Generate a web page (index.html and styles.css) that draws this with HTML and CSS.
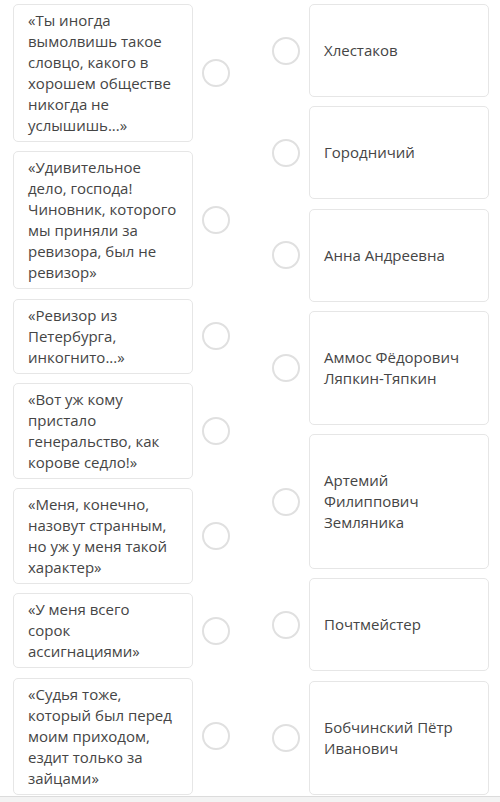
FILE: index.html
```html
<!DOCTYPE html>
<html lang="ru">
<head>
    <meta charset="UTF-8">
    <meta name="viewport" content="width=device-width, initial-scale=1.0">
    <title>Соотнесите реплики и героев</title>
    <link rel="stylesheet" href="styles.css">
</head>
<body>
    <div class="match">
        <div class="column column-left">
            <div class="item">
                <div class="card">«Ты иногда вымолвишь такое словцо, какого в хорошем обществе никогда не услышишь...»</div>
                <span class="dot"></span>
            </div>
            <div class="item">
                <div class="card">«Удивительное дело, господа! Чиновник, которого мы приняли за ревизора, был не ревизор»</div>
                <span class="dot"></span>
            </div>
            <div class="item">
                <div class="card">«Ревизор из Петербурга, инкогнито...»</div>
                <span class="dot"></span>
            </div>
            <div class="item">
                <div class="card">«Вот уж кому пристало генеральство, как корове седло!»</div>
                <span class="dot"></span>
            </div>
            <div class="item">
                <div class="card">«Меня, конечно, назовут странным, но уж у меня такой характер»</div>
                <span class="dot"></span>
            </div>
            <div class="item">
                <div class="card">«У меня всего<br>сорок ассигнациями»</div>
                <span class="dot"></span>
            </div>
            <div class="item">
                <div class="card">«Судья тоже, который был перед моим приходом, ездит только за зайцами»</div>
                <span class="dot"></span>
            </div>
        </div>

        <div class="column column-right">
            <div class="item">
                <span class="dot"></span>
                <div class="card card-name">Хлестаков</div>
            </div>
            <div class="item">
                <span class="dot"></span>
                <div class="card card-name">Городничий</div>
            </div>
            <div class="item">
                <span class="dot"></span>
                <div class="card card-name">Анна Андреевна</div>
            </div>
            <div class="item">
                <span class="dot"></span>
                <div class="card card-name">Аммос Фёдорович Ляпкин-Тяпкин</div>
            </div>
            <div class="item">
                <span class="dot"></span>
                <div class="card card-name">Артемий Филиппович Земляника</div>
            </div>
            <div class="item">
                <span class="dot"></span>
                <div class="card card-name">Почтмейстер</div>
            </div>
            <div class="item">
                <span class="dot"></span>
                <div class="card card-name">Бобчинский Пётр Иванович</div>
            </div>
        </div>
    </div>
</body>
</html>
```

FILE: styles.css
```css
body {
    margin: 0;
    background: #f3f3f3;
    font-family: "Open Sans", Arial, sans-serif;
    font-size: 15px;
    line-height: 21px;
    color: #454545;
}

.match {
    display: flex;
    justify-content: space-between;
    width: 500px;
    box-sizing: border-box;
    padding: 4px 11px 1px 13px;
    background: #fff;
    border-bottom: 1px solid #dcdcdc;
}

.column {
    display: flex;
    flex-direction: column;
    gap: 9.3px;
}

.item {
    display: flex;
    align-items: center;
    gap: 9px;
}

.card {
    width: 180px;
    box-sizing: border-box;
    padding: 5px 14px;
    border: 1px solid #e6e6e6;
    border-radius: 5px;
    background: #fff;
}

.card-name {
    padding: 35px 14px;
}

.dot {
    width: 28px;
    height: 28px;
    box-sizing: border-box;
    border: 2px solid #e0e0e0;
    border-radius: 50%;
    flex-shrink: 0;
}
```
